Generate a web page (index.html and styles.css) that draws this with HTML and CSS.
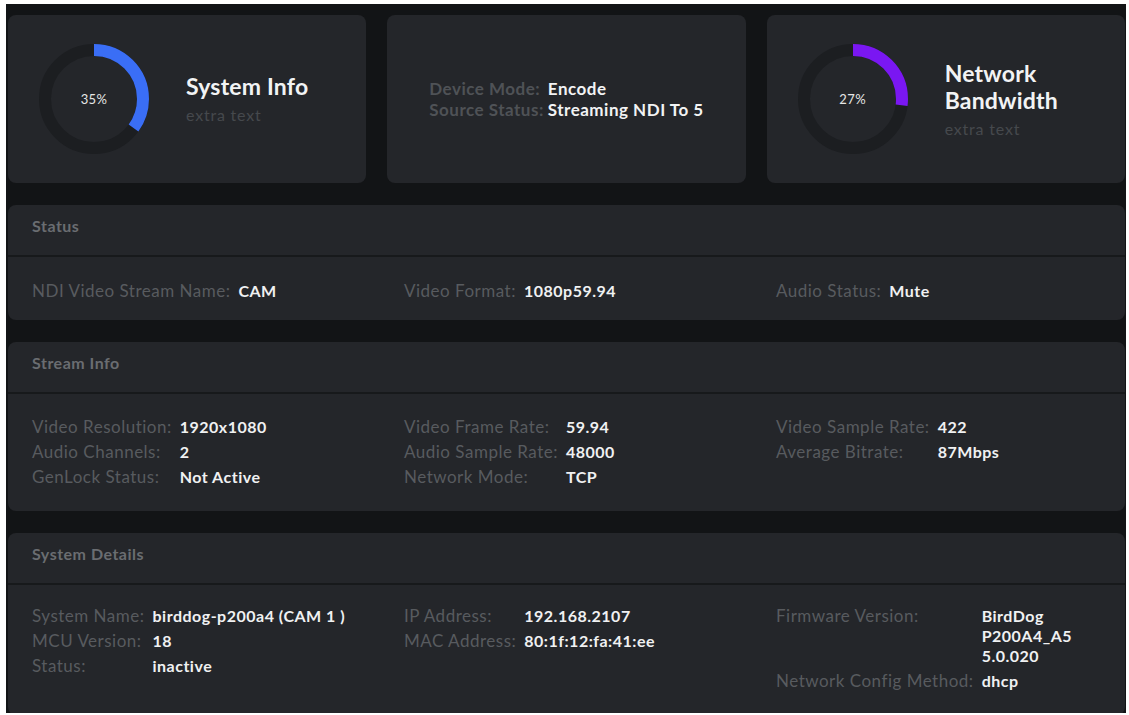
FILE: index.html
```html
<!DOCTYPE html>
<html lang="en">
<head>
  <meta charset="UTF-8">
  <meta name="viewport" content="width=device-width, initial-scale=1.0">
  <title>Device Dashboard</title>
  <link rel="stylesheet" href="styles.css">
</head>
<body>
  <div class="dashboard">

    <!-- top summary cards -->
    <div class="cards">
      <div class="card card-gauge">
        <div class="gauge">
          <svg width="110" height="110" viewBox="0 0 110 110">
            <circle class="track" cx="55" cy="55" r="49"></circle>
            <circle class="arc arc-blue" cx="55" cy="55" r="49" stroke-dasharray="107.8 400" transform="rotate(-90 55 55)"></circle>
          </svg>
          <span class="gauge-value">35%</span>
        </div>
        <div class="card-text">
          <div class="card-title">System Info</div>
          <div class="card-sub">extra text</div>
        </div>
      </div>

      <div class="card card-mode">
        <div class="mode-list">
          <span class="mode-label">Device Mode:</span><span class="mode-value">Encode</span>
          <span class="mode-label">Source Status:</span><span class="mode-value">Streaming NDI To 5</span>
        </div>
      </div>

      <div class="card card-gauge">
        <div class="gauge">
          <svg width="110" height="110" viewBox="0 0 110 110">
            <circle class="track" cx="55" cy="55" r="49"></circle>
            <circle class="arc arc-purple" cx="55" cy="55" r="49" stroke-dasharray="83.1 400" transform="rotate(-90 55 55)"></circle>
          </svg>
          <span class="gauge-value">27%</span>
        </div>
        <div class="card-text">
          <div class="card-title">Network<br>Bandwidth</div>
          <div class="card-sub">extra text</div>
        </div>
      </div>
    </div>

    <!-- Status -->
    <div class="panel">
      <div class="panel-header">Status</div>
      <div class="panel-body panel-body-short">
        <div class="col">
          <span class="label">NDI Video Stream Name:</span><span class="value">CAM</span>
        </div>
        <div class="col">
          <span class="label">Video Format:</span><span class="value">1080p59.94</span>
        </div>
        <div class="col">
          <span class="label">Audio Status:</span><span class="value">Mute</span>
        </div>
      </div>
    </div>

    <!-- Stream Info -->
    <div class="panel">
      <div class="panel-header">Stream Info</div>
      <div class="panel-body">
        <div class="col">
          <span class="label">Video Resolution:</span><span class="value">1920x1080</span>
          <span class="label">Audio Channels:</span><span class="value">2</span>
          <span class="label">GenLock Status:</span><span class="value">Not Active</span>
        </div>
        <div class="col">
          <span class="label">Video Frame Rate:</span><span class="value">59.94</span>
          <span class="label">Audio Sample Rate:</span><span class="value">48000</span>
          <span class="label">Network Mode:</span><span class="value">TCP</span>
        </div>
        <div class="col">
          <span class="label">Video Sample Rate:</span><span class="value">422</span>
          <span class="label">Average Bitrate:</span><span class="value">87Mbps</span>
        </div>
      </div>
    </div>

    <!-- System Details -->
    <div class="panel">
      <div class="panel-header">System Details</div>
      <div class="panel-body panel-body-last">
        <div class="col">
          <span class="label">System Name:</span><span class="value">birddog-p200a4 (CAM 1 )</span>
          <span class="label">MCU Version:</span><span class="value">18</span>
          <span class="label">Status:</span><span class="value">inactive</span>
        </div>
        <div class="col">
          <span class="label">IP Address:</span><span class="value">192.168.2107</span>
          <span class="label">MAC Address:</span><span class="value">80:1f:12:fa:41:ee</span>
        </div>
        <div class="col">
          <span class="label">Firmware Version:</span><span class="value value-wrap">BirdDog P200A4_A5 5.0.020</span>
          <span class="label">Network Config Method:</span><span class="value">dhcp</span>
        </div>
      </div>
    </div>

  </div>
</body>
</html>
```

FILE: styles.css
```css
body {
  margin: 0;
  background-color: #ffffff;
  font-family: Lato, "Open Sans", sans-serif;
}

/* dark page area */
.dashboard {
  margin: 4px 3px 0 6px;
  height: 709px;
  overflow: hidden;
  background-color: #121416;
  padding: 11px 1px 0 2px;
  box-sizing: border-box;
}

/* summary cards */
.cards {
  display: grid;
  grid-template-columns: repeat(3, 1fr);
  gap: 21px;
  margin-bottom: 22px;
}

.card {
  height: 168px;
  background-color: #24262a;
  border-radius: 8px;
  display: flex;
  align-items: center;
}

.card-gauge {
  padding-left: 31px;
  gap: 37px;
}

.gauge {
  position: relative;
  width: 110px;
  height: 110px;
}

.gauge svg {
  display: block;
}

.track {
  fill: none;
  stroke: #1c1e21;
  stroke-width: 12;
}

.arc {
  fill: none;
  stroke-width: 12;
}

.arc-blue {
  stroke: #3a6ef6;
}

.arc-purple {
  stroke: #7a17f2;
}

/* percent in the middle of the ring */
.gauge-value {
  position: absolute;
  top: 0;
  left: 0;
  width: 100%;
  line-height: 110px;
  text-align: center;
  font-size: 13px;
  letter-spacing: 0.4px;
  color: #e6e6e6;
}

.card-title {
  font-size: 23px;
  font-weight: bold;
  letter-spacing: 0.2px;
  line-height: 27px;
  color: #f2f3f4;
}

.card-sub {
  margin-top: 5px;
  font-size: 16px;
  letter-spacing: 0.8px;
  line-height: 20px;
  color: #46494d;
}

.card-mode {
  justify-content: center;
}

.mode-list {
  display: grid;
  grid-template-columns: max-content max-content;
  column-gap: 4px;
  font-size: 17px;
  letter-spacing: 0.5px;
  font-weight: bold;
  line-height: 21px;
}

.mode-label {
  color: #4f5256;
}

.mode-value {
  color: #f2f3f4;
}

/* info panels */
.panel {
  background-color: #24262a;
  border-radius: 8px;
  margin-bottom: 22px;
}

.panel-header {
  height: 50px;
  padding: 0 24px;
  font-size: 16px;
  letter-spacing: 0.5px;
  line-height: 42px;
  font-weight: bold;
  color: #6a6d71;
  border-bottom: 2px solid #17191b;
}

.panel-body {
  display: grid;
  grid-template-columns: repeat(3, 1fr);
  column-gap: 47px;
  padding: 23px 24px 24px;
}

.panel-body-short {
  padding-top: 24px;
  padding-bottom: 19px;
}

.panel-body-last {
  padding-top: 21px;
}

.col {
  display: grid;
  grid-template-columns: max-content 1fr;
  column-gap: 8px;
  row-gap: 5px;
  align-content: start;
  line-height: 20px;
}

.label {
  font-size: 17px;
  letter-spacing: 0.5px;
  color: #585b5f;
}

.value {
  font-size: 16px;
  letter-spacing: 0.5px;
  color: #f0f1f2;
  font-weight: bold;
}

.value-wrap {
  max-width: 110px;
}
```
